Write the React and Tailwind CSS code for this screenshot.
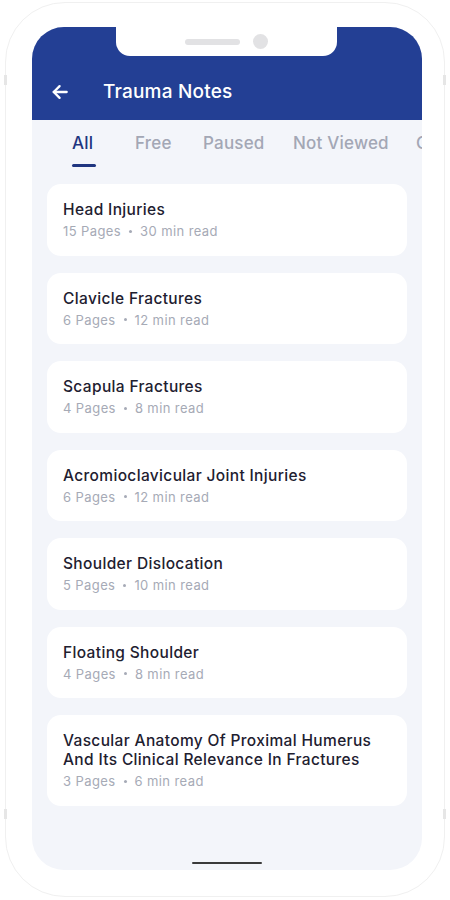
import React from "react";

const notes = [
  { t: "Head Injuries", p: "15 Pages", m: "30 min read" },
  { t: "Clavicle Fractures", p: "6 Pages", m: "12 min read" },
  { t: "Scapula Fractures", p: "4 Pages", m: "8 min read" },
  { t: "Acromioclavicular Joint Injuries", p: "6 Pages", m: "12 min read" },
  { t: "Shoulder Dislocation", p: "5 Pages", m: "10 min read" },
  { t: "Floating Shoulder", p: "4 Pages", m: "8 min read" },
  { t: "Vascular Anatomy Of Proximal Humerus And Its Clinical Relevance In Fractures", p: "3 Pages", m: "6 min read" },
];

export default function App() {
  return (
    <div className="w-[450px] h-[900px] bg-white pt-[2px] pl-[5px]" style={{ fontFamily: "Inter, 'Noto Sans', sans-serif" }}>
      <div className="relative w-[440px] h-[895px] rounded-[60px] border-[1.5px] border-[#f0f0f0] pt-[24px] pl-[26px]">
        <div className="absolute left-[-2px] top-[72px] w-[3px] h-[10px] bg-[#e6e6e6]"></div>
        <div className="absolute left-[-2px] top-[806px] w-[3px] h-[10px] bg-[#e6e6e6]"></div>
        <div className="absolute right-[-2px] top-[72px] w-[3px] h-[10px] bg-[#e6e6e6]"></div>
        <div className="absolute right-[-2px] top-[806px] w-[3px] h-[10px] bg-[#e6e6e6]"></div>
        <div className="relative w-[390px] h-[843px] rounded-[32px] overflow-hidden bg-[#f3f5fa] flex flex-col">
          <div className="absolute left-[84px] top-0 w-[221px] h-[29px] bg-white rounded-b-[14px] flex items-center justify-center gap-[13px]">
            <div className="w-[55px] h-[6px] rounded-full bg-[#e2e2e4]"></div>
            <div className="w-[15px] h-[15px] rounded-full bg-[#e2e2e4]"></div>
          </div>
          <div className="h-[93px] shrink-0 bg-[#233f94] flex items-end pb-[16px] pl-[18px]">
            <div className="h-[24px] flex items-center">
              <svg width="20" height="20" viewBox="0 0 24 24" fill="none" stroke="white" strokeWidth="2.8" strokeLinecap="round" strokeLinejoin="round">
                <path d="M20 12H4.5" />
                <path d="M11.5 19l-7-7 7-7" />
              </svg>
            </div>
            <span className="ml-[33px] text-white text-[19px] leading-[24px] font-medium tracking-[0.2px]">Trauma Notes</span>
          </div>
          <div className="h-[64px] shrink-0 flex items-start pl-[40px] pt-[12px] text-[17px] leading-[22px] font-medium whitespace-nowrap tracking-[0.2px] overflow-hidden">
            <div className="flex flex-col items-start w-[63px] shrink-0">
              <span className="text-[#1f3580]">All</span>
              <div className="mt-[10px] w-[24px] h-[2.5px] bg-[#1f3580] rounded-full"></div>
            </div>
            <span className="text-[#a3a7b5] w-[68px] shrink-0">Free</span>
            <span className="text-[#a3a7b5] w-[90px] shrink-0">Paused</span>
            <span className="text-[#a3a7b5] w-[123px] shrink-0">Not Viewed</span>
            <span className="text-[#a3a7b5] shrink-0">Completed</span>
          </div>
          <div className="flex flex-col gap-[17px] px-[15px]">
            {notes.map((n, i) => (
              <div key={i} className="bg-white rounded-[14px] pl-[16px] pr-[16px] pt-[16px] pb-[15.5px]">
                <div className="text-[15.5px] leading-[19px] font-medium text-[#1e2030] tracking-[0.35px]">{n.t}</div>
                <div className="mt-[3px] text-[13px] leading-[18px] text-[#a6aab6] flex items-center tracking-[0.4px]">
                  <span>{n.p}</span>
                  <span className="mx-[8px] w-[3px] h-[3px] rounded-full bg-[#a6aab6]"></span>
                  <span>{n.m}</span>
                </div>
              </div>
            ))}
          </div>
          <div className="flex-1"></div>
          <div className="self-center mb-[6px] w-[70px] h-[2.5px] rounded-full bg-[#3a3a3a]"></div>
        </div>
      </div>
    </div>
  );
}
